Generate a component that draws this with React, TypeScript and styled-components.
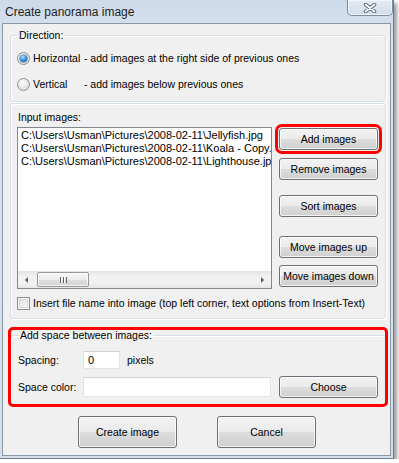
import styled, { createGlobalStyle, css } from "styled-components";

// ------------------ GLOBAL ------------------
const GlobalStyle = createGlobalStyle`
  html, body {
    margin: 0;
    padding: 0;
    background: #fff;
  }
  body {
    font-family: "Liberation Sans", Arial, sans-serif;
    font-size: 10.5px;
    color: #000;
  }
`;

// ------------------ DATA ------------------
const files = [
  "C:\\Users\\Usman\\Pictures\\2008-02-11\\Jellyfish.jpg",
  "C:\\Users\\Usman\\Pictures\\2008-02-11\\Koala - Copy.jpg",
  "C:\\Users\\Usman\\Pictures\\2008-02-11\\Lighthouse.jpg",
];

const sideButtons = [
  { label: "Add images", top: 1, mark: true },
  { label: "Remove images", top: 8 },
  { label: "Sort images", top: 15 },
  { label: "Move images up", top: 19 },
  { label: "Move images down", top: 7 },
];

// ------------------ PAGE ------------------
export default function App() {
  return (
    <>
      <GlobalStyle />
      <Window>
        <TitleBar>
          <Title>Create panorama image</Title>
          <CloseButton>
            <svg width="14" height="10" viewBox="0 0 14 10">
              <path d="M2.5 1.5 L11.5 8.5 M11.5 1.5 L2.5 8.5" stroke="#56657a" strokeWidth="3.6" strokeLinecap="round" />
              <path d="M2.5 1.5 L11.5 8.5 M11.5 1.5 L2.5 8.5" stroke="#fff" strokeWidth="1.8" strokeLinecap="round" />
            </svg>
          </CloseButton>
        </TitleBar>

        <Client>
          {/* Direction */}
          <GroupBox $pad="8px 0 9px 6px">
            <Legend>Direction:</Legend>
            <RadioList>
              <OptionRow>
                <Radio $checked />
                <Term>Horizontal</Term> - add images at the right side of previous ones
              </OptionRow>
              <OptionRow>
                <Radio />
                <Term>Vertical</Term> - add images below previous ones
              </OptionRow>
            </RadioList>
          </GroupBox>

          {/* Input images */}
          <Panel>
            <Caption>Input images:</Caption>
            <ListRow>
              <ListBox>
                <ListItems>
                  {files.map((f) => (
                    <ListItem key={f}>{f}</ListItem>
                  ))}
                </ListItems>
                <HScroll>
                  <ArrowCell>
                    <Arrow $dir="left" />
                  </ArrowCell>
                  <Thumb>
                    <Grip />
                  </Thumb>
                  <Track />
                  <ArrowCell>
                    <Arrow $dir="right" />
                  </ArrowCell>
                </HScroll>
              </ListBox>
              <ButtonStack>
                {sideButtons.map((b) => (
                  <Button key={b.label} $top={b.top} $mark={b.mark}>
                    {b.label}
                  </Button>
                ))}
              </ButtonStack>
            </ListRow>
            <CheckRow>
              <CheckBox />
              Insert file name into image (top left corner, text options from Insert-Text)
            </CheckRow>
          </Panel>

          {/* Space between images */}
          <GroupBox $pad="8px 0 6px 7px" $mark $top={10}>
            <Legend>Add space between images:</Legend>
            <FieldRow $h={20}>
              <FieldLabel>Spacing:</FieldLabel>
              <TextInput $w={37} $h={18} value="0" readOnly />
              <Unit>pixels</Unit>
            </FieldRow>
            <FieldRow $h={22} $top={6}>
              <FieldLabel>Space color:</FieldLabel>
              <TextInput $w={188} $h={20} value="" readOnly />
              <Button $left={8}>Choose</Button>
            </FieldRow>
          </GroupBox>

          <ButtonBar>
            <Button $size="large">Create image</Button>
            <Button $size="large">Cancel</Button>
          </ButtonBar>
        </Client>
      </Window>
    </>
  );
}

// ------------------ STYLES ------------------
const markOutline = css`
  outline: 3px solid #f00;
`;

const Window = styled.div`
  width: 394px;
  height: 459px;
  box-sizing: border-box;
  display: flex;
  flex-direction: column;
  padding: 0 2px 2px 2px;
  background: linear-gradient(#cddaea, #d9e3ef 40px, #d6e0ec);
  border-right: 1px solid #6d7b8c;
  border-bottom: 1px solid #6d7b8c;
  box-shadow: 3px 3px 4px rgba(0, 0, 0, 0.4);
`;

const TitleBar = styled.div`
  height: 23px;
  display: flex;
  justify-content: space-between;
  align-items: flex-start;
`;

const Title = styled.div`
  margin: 4px 0 0 3px;
  font-family: "Liberation Sans", Arial, sans-serif;
  font-size: 12px;
  line-height: 16px;
  color: #1e1e1e;
`;

const CloseButton = styled.div`
  width: 46px;
  height: 16px;
  margin-right: -2px;
  box-sizing: border-box;
  display: flex;
  align-items: center;
  justify-content: center;
  border: 1px solid #7d8ca0;
  border-top: none;
  border-radius: 0 0 5px 5px;
  background: linear-gradient(#e4ebf3, #d3dde9);
  box-shadow: inset 0 0 0 1px rgba(255, 255, 255, 0.6);
`;

const Client = styled.div`
  flex: 1;
  display: flex;
  flex-direction: column;
  box-sizing: border-box;
  padding: 5px 4px 7px 7px;
  background: #f0f0f0;
  border: 1px solid #8a97a6;
`;

const groupBorder = css`
  border: 1px solid #d5dfe5;
  border-radius: 3px;
  box-shadow: inset 1px 1px 0 #fff, 1px 1px 0 #fff;
`;

const GroupBox = styled.fieldset<{ $pad: string; $mark?: boolean; $top?: number }>`
  margin: ${(p) => p.$top ?? 0}px 0 0 0;
  min-width: 0;
  padding: ${(p) => p.$pad};
  ${groupBorder}
  ${(p) =>
    p.$mark &&
    css`
      ${markOutline};
      outline-offset: -1px;
    `}
`;

const Legend = styled.legend`
  padding: 0 2px;
  line-height: 13px;
  font-size: 10.5px;
`;

const RadioList = styled.div`
  display: flex;
  flex-direction: column;
  gap: 10px;
`;

const OptionRow = styled.div`
  height: 16px;
  display: flex;
  align-items: center;
  white-space: pre;
`;

const Term = styled.span`
  display: inline-block;
  min-width: 48px;
`;

const Radio = styled.span<{ $checked?: boolean }>`
  width: 13px;
  height: 13px;
  margin-right: 3px;
  box-sizing: border-box;
  border-radius: 50%;
  border: 1px solid #8e8f8f;
  background: radial-gradient(circle at 40% 35%, #fbfbfb, #dcdcdc 80%);
  display: flex;
  align-items: center;
  justify-content: center;
  flex-shrink: 0;

  &::after {
    content: "";
    width: 7px;
    height: 7px;
    border-radius: 50%;
    display: ${(p) => (p.$checked ? "block" : "none")};
    background: radial-gradient(circle at 40% 30%, #b6e4ff, #2b8ad8 55%, #0b4f95);
    box-shadow: 0 0 0 0.5px #1d5c99;
  }
`;

const Panel = styled.div`
  margin-top: 1px;
  display: flex;
  flex-direction: column;
  padding: 7px 7px 8px 6px;
  ${groupBorder}
`;

const Caption = styled.div`
  line-height: 13px;
  margin-left: 1px;
  margin-bottom: 3px;
`;

const ListRow = styled.div`
  display: flex;
  gap: 7px;
  align-items: flex-start;
`;

const ListBox = styled.div`
  width: 255px;
  height: 162px;
  box-sizing: border-box;
  display: flex;
  flex-direction: column;
  border: 1px solid #828790;
  background: #fff;
  overflow: hidden;
`;

const ListItems = styled.div`
  flex: 1;
  padding: 1px 0 0 3px;
  font-size: 11px;
`;

const ListItem = styled.div`
  line-height: 13px;
  white-space: nowrap;
  overflow: hidden;
  text-overflow: clip;
`;

const HScroll = styled.div`
  height: 17px;
  display: flex;
  align-items: center;
  background: linear-gradient(#e3e3e3, #f1f1f1 30%, #f1f1f1 70%, #e6e6e6);
`;

const ArrowCell = styled.div`
  width: 17px;
  height: 17px;
  display: flex;
  align-items: center;
  justify-content: center;
`;

const Arrow = styled.span<{ $dir: "left" | "right" }>`
  width: 0;
  height: 0;
  border-top: 3px solid transparent;
  border-bottom: 3px solid transparent;
  ${(p) =>
    p.$dir === "left"
      ? css`
          border-right: 3px solid #5c5c5c;
        `
      : css`
          border-left: 3px solid #5c5c5c;
        `}
`;

const Thumb = styled.div`
  width: 52px;
  height: 15px;
  margin-left: 2px;
  box-sizing: border-box;
  display: flex;
  align-items: center;
  justify-content: center;
  border: 1px solid #979797;
  border-radius: 2px;
  background: linear-gradient(#f7f7f7, #ececec 50%, #dcdcdc 51%, #d6d6d6);
  box-shadow: inset 0 0 0 1px rgba(255, 255, 255, 0.7);
`;

const Grip = styled.span`
  width: 7px;
  height: 6px;
  background: repeating-linear-gradient(90deg, #5f5f5f 0 1px, #fff 1px 2px, transparent 2px 3px);
`;

const Track = styled.div`
  flex: 1;
`;

const ButtonStack = styled.div`
  display: flex;
  flex-direction: column;
`;

const Button = styled.button<{
  $top?: number;
  $left?: number;
  $mark?: boolean;
  $size?: "normal" | "large";
}>`
  width: 99px;
  height: ${(p) => (p.$size === "large" ? 32 : 22)}px;
  margin: ${(p) => p.$top ?? 0}px 0 0 ${(p) => p.$left ?? 0}px;
  padding: 0;
  box-sizing: border-box;
  flex-shrink: 0;
  border: 1px solid #707070;
  border-radius: 3px;
  background: linear-gradient(#f2f2f2 0%, #ebebeb 50%, #dddddd 51%, #cfcfcf 100%);
  box-shadow: inset 0 0 0 1px rgba(255, 255, 255, 0.75);
  font-family: "Liberation Sans", Arial, sans-serif;
  font-size: 10.5px;
  color: #000;
  white-space: nowrap;
  ${(p) =>
    p.$mark &&
    css`
      ${markOutline};
      outline-offset: 1px;
    `}
`;

const CheckRow = styled.div`
  height: 14px;
  margin-top: 7px;
  display: flex;
  align-items: center;
  white-space: nowrap;
`;

const CheckBox = styled.span`
  width: 13px;
  height: 13px;
  margin-right: 3px;
  box-sizing: border-box;
  border: 1px solid #8e8f8f;
  background: linear-gradient(135deg, #dcdcdc, #fbfbfb);
  box-shadow: inset 0 0 0 1px #f4f4f4, inset 0 0 0 2px #d8d8d8;
  flex-shrink: 0;
`;

const FieldRow = styled.div<{ $h: number; $top?: number }>`
  height: ${(p) => p.$h}px;
  margin-top: ${(p) => p.$top ?? 0}px;
  display: flex;
  align-items: center;
`;

const FieldLabel = styled.span`
  width: 65px;
  flex-shrink: 0;
`;

const TextInput = styled.input<{ $w: number; $h: number }>`
  width: ${(p) => p.$w}px;
  height: ${(p) => p.$h}px;
  box-sizing: border-box;
  margin: 0;
  padding: 0 0 0 4px;
  border: 1px solid #e1e4e8;
  border-top-color: #d0d3d8;
  background: #fff;
  font-family: "Liberation Sans", Arial, sans-serif;
  font-size: 11px;
  color: #000;
  outline: none;
`;

const Unit = styled.span`
  margin-left: 7px;
`;

const ButtonBar = styled.div`
  margin-top: 11px;
  padding-right: 2px;
  display: flex;
  justify-content: center;
  gap: 40px;
`;
